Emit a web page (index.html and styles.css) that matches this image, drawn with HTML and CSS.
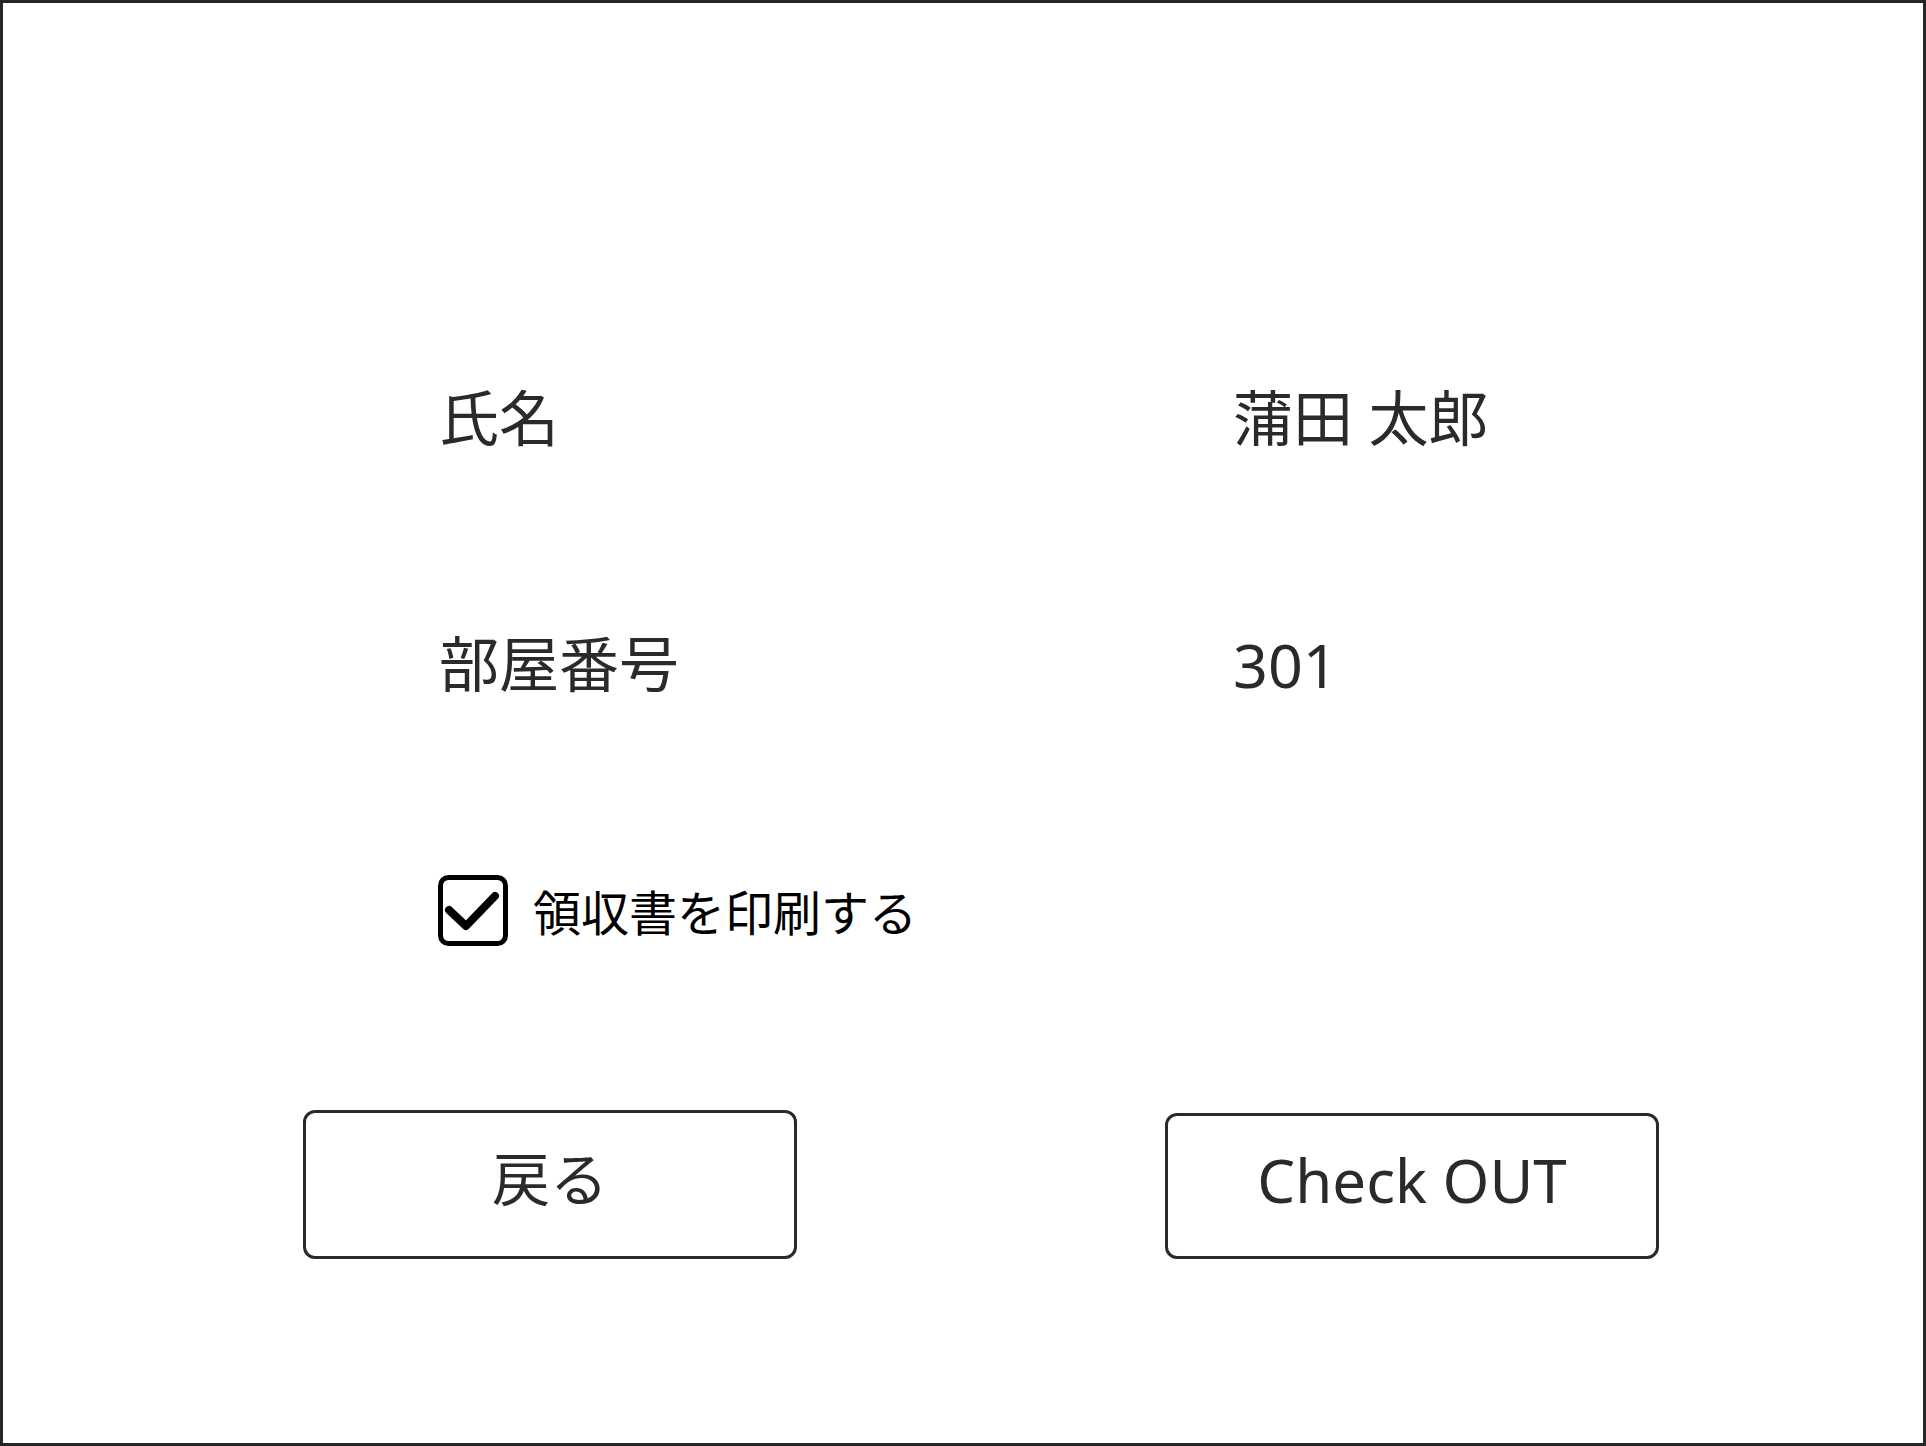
FILE: index.html
```html
<!DOCTYPE html>
<html lang="ja">
<head>
<meta charset="utf-8">
<title>Check OUT</title>
<link rel="stylesheet" href="styles.css">
</head>
<body>
<div class="frame">
  <div class="form">
    <div class="row">
      <div class="label">氏名</div>
      <div class="value">蒲田 太郎</div>
    </div>
    <div class="row">
      <div class="label">部屋番号</div>
      <div class="value value-num">301</div>
    </div>
    <div class="row">
      <label class="check">
        <span class="box">
          <svg width="70" height="71" viewBox="0 0 70 71">
            <rect x="2.5" y="2.5" width="65" height="66" rx="8" ry="8" fill="none" stroke="#000" stroke-width="5"/>
            <path d="M11 35 L28 51 L57 21" fill="none" stroke="#000" stroke-width="8" stroke-linecap="round" stroke-linejoin="round"/>
          </svg>
        </span>
        <span class="check-text">領収書を印刷する</span>
      </label>
    </div>
  </div>
  <div class="actions">
    <button class="btn btn-back" type="button">戻る</button>
    <button class="btn btn-out" type="button">Check OUT</button>
  </div>
</div>
</body>
</html>
```
FILE: styles.css
```css
html, body {
  margin: 0;
  padding: 0;
  background: #ffffff;
}

body {
  font-family: "Noto Sans", "Noto Sans CJK JP", sans-serif;
  color: #2a2a2a;
}

.frame {
  width: 1926px;
  height: 1446px;
  box-sizing: border-box;
  border: 3px solid #262626;
  display: flex;
  flex-direction: column;
}

.form {
  padding-top: 292px;
  padding-left: 436px;
  display: flex;
  flex-direction: column;
}

.row {
  height: 246px;
  display: grid;
  grid-template-columns: 794px 1fr;
  align-items: center;
}

.label,
.value {
  font-size: 60px;
  line-height: 1;
}

.value-num {
  font-size: 61px;
}

.check {
  display: flex;
  align-items: center;
  gap: 25px;
  margin-left: -1px;
  grid-column: 1 / span 2;
}

.box {
  display: block;
  width: 70px;
  height: 71px;
}

.box svg {
  display: block;
}

.check-text {
  font-family: "Noto Sans CJK JP", sans-serif;
  font-size: 48px;
  line-height: 1;
  color: #000000;
}

.actions {
  margin-top: 77px;
  padding-left: 300px;
  display: flex;
  align-items: flex-end;
  gap: 368px;
}

.btn {
  box-sizing: border-box;
  width: 494px;
  background: #ffffff;
  border: 3px solid #2a2a2a;
  border-radius: 12px;
  color: #2a2a2a;
  font-family: "Noto Sans", "Noto Sans CJK JP", sans-serif;
  font-size: 60px;
  line-height: 1;
  padding: 0 0 12px 0;
  display: flex;
  align-items: center;
  justify-content: center;
}

.btn-back {
  height: 149px;
  font-size: 58px;
}

.btn-out {
  height: 146px;
}
```
